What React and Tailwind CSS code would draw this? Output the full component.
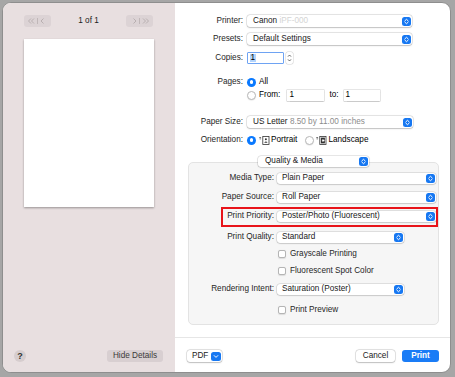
import React from "react";

const FONT = { fontFamily: '"Liberation Sans", Arial, sans-serif' };

function BlueStepper() {
  return (
    <span className="flex items-center justify-center w-[9px] h-[9px] rounded-[2.5px] bg-[#1778f2] shrink-0">
      <svg width="9" height="9" viewBox="0 0 9 9">
        <path d="M2.9 3.8 L4.5 2.3 L6.1 3.8" stroke="white" strokeWidth="1" fill="none" strokeLinecap="round" strokeLinejoin="round" />
        <path d="M2.9 5.2 L4.5 6.7 L6.1 5.2" stroke="white" strokeWidth="1" fill="none" strokeLinecap="round" strokeLinejoin="round" />
      </svg>
    </span>
  );
}

function Popup({ w, h = "h-[12px]", children, pl = "pl-[6px]" }) {
  return (
    <div
      className={`${w} ${h} ${pl} pr-[1.5px] flex items-center justify-between bg-white rounded-[3px] shadow-[0_0_0_0.5px_rgba(0,0,0,0.16),0_0.5px_1.5px_rgba(0,0,0,0.18)]`}
    >
      <span className="whitespace-nowrap text-[#202020] leading-none">{children}</span>
      <BlueStepper />
    </div>
  );
}

function Radio({ on }) {
  if (on)
    return (
      <span className="w-[9px] h-[9px] rounded-full bg-[#0a79ff] flex items-center justify-center shrink-0">
        <span className="w-[3.5px] h-[3.5px] rounded-full bg-white" />
      </span>
    );
  return (
    <span className="block w-[9px] h-[9px] rounded-full bg-white border-[0.5px] border-[#b8b8b8] shadow-[0_0.5px_1px_rgba(0,0,0,0.12)] shrink-0" />
  );
}

function Checkbox() {
  return (
    <span className="block w-[8px] h-[8px] rounded-[2px] bg-white border-[0.5px] border-[#b5b5b5] shadow-[0_0.5px_1px_rgba(0,0,0,0.1)] shrink-0" />
  );
}

function Field({ w, children }) {
  return (
    <div className={`${w} h-[11px] bg-white flex items-center pl-[2px] shadow-[0_0_0_0.5px_rgba(0,0,0,0.2),0_0.5px_1px_rgba(0,0,0,0.12)]`}>
      <span className="leading-none">{children}</span>
    </div>
  );
}

function PortraitIcon() {
  return (
    <svg width="11" height="9" viewBox="0 0 11 9">
      <path d="M1.2 1.2 L1.2 3.6 M0.3 2.1 L1.2 1 L2.1 2.1" stroke="#555" strokeWidth="0.7" fill="none" />
      <rect x="3.8" y="0.5" width="6.2" height="8" fill="white" stroke="#333" strokeWidth="0.8" />
      <circle cx="6.9" cy="3.3" r="1" fill="#333" />
      <path d="M5.2 6.8 Q6.9 4.4 8.6 6.8 Z" fill="#333" />
    </svg>
  );
}

function LandscapeIcon() {
  return (
    <svg width="11" height="9" viewBox="0 0 11 9">
      <path d="M1.2 1.2 L1.2 3.6 M0.3 2.1 L1.2 1 L2.1 2.1" stroke="#555" strokeWidth="0.7" fill="none" />
      <rect x="3.8" y="0.5" width="6.2" height="8" fill="white" stroke="#333" strokeWidth="0.8" />
      <rect x="4.9" y="1.6" width="4" height="5.8" fill="#333" />
      <circle cx="7.6" cy="4.5" r="0.9" fill="white" />
      <path d="M6.8 3 Q4.9 4.5 6.8 6 Z" fill="white" />
    </svg>
  );
}

function TopRow({ label, mt, children, h = "h-[12px]" }) {
  return (
    <div className={`flex items-center ${h} ${mt}`}>
      <span className="w-[68px] text-right text-[#262626] leading-none whitespace-nowrap">{label}</span>
      <div className="ml-[4px] flex items-center">{children}</div>
    </div>
  );
}

function BoxRow({ label, mt, children, h = "h-[11px]" }) {
  return (
    <div className={`flex items-center ${h} ${mt}`}>
      <span className="w-[85px] text-right text-[#262626] leading-none whitespace-nowrap">{label}</span>
      <div className="ml-[3px] flex items-center">{children}</div>
    </div>
  );
}

function CheckRow({ label, mt }) {
  return (
    <div className={`flex items-center h-[10px] ${mt} pl-[89px]`}>
      <Checkbox />
      <span className="ml-[4px] leading-none text-[#262626] whitespace-nowrap">{label}</span>
    </div>
  );
}

function NavGroup({ left }) {
  const c = "#b3aaac";
  return (
    <div className="w-[27px] h-[12px] rounded-[3px] bg-[#dcd3d5] flex items-center justify-center">
      <svg width="27" height="12" viewBox="0 0 27 12">
        {left ? (
          <>
            <path d="M7 3.5 L4.5 6 L7 8.5 M10 3.5 L7.5 6 L10 8.5" stroke={c} strokeWidth="0.9" fill="none" />
            <path d="M13.5 3 L13.5 9" stroke={c} strokeWidth="0.7" />
            <path d="M19.5 3.5 L17 6 L19.5 8.5" stroke={c} strokeWidth="0.9" fill="none" />
          </>
        ) : (
          <>
            <path d="M7.5 3.5 L10 6 L7.5 8.5" stroke={c} strokeWidth="0.9" fill="none" />
            <path d="M13.5 3 L13.5 9" stroke={c} strokeWidth="0.7" />
            <path d="M17 3.5 L19.5 6 L17 8.5 M20 3.5 L22.5 6 L20 8.5" stroke={c} strokeWidth="0.9" fill="none" />
          </>
        )}
      </svg>
    </div>
  );
}

export default function App() {
  return (
    <div className="w-[455px] h-[377px] bg-[#a6a6a6] pt-[2px] pl-[2px] pr-[4px] pb-[4px] text-[8.2px]" style={FONT}>
      <div className="w-full h-full rounded-[9px] border border-[#8e8e8e] overflow-hidden flex bg-white">
        {/* Sidebar */}
        <div className="w-[172px] h-full bg-[#e8dfe0] flex flex-col pt-[12px] pb-[10px]">
          <div className="flex items-center justify-between h-[12px] pl-[21px] pr-[22px]">
            <NavGroup left />
            <span className="text-[#222] leading-none">1 of 1</span>
            <NavGroup />
          </div>
          <div className="mt-[12px] mx-auto w-[130px] h-[168px] bg-white shadow-[0_1px_2px_rgba(0,0,0,0.35)]" />
          <div className="mt-auto flex items-center justify-between h-[12px] pl-[11px] pr-[12px]">
            <span className="w-[12px] h-[12px] rounded-full bg-[#d6cdce] flex items-center justify-center font-bold text-[9px] text-[#333] leading-none">?</span>
            <span className="w-[56px] h-[12px] rounded-[3px] bg-[#d8cfd1] flex items-center justify-center text-[#3a3a3a] leading-none">Hide Details</span>
          </div>
        </div>

        {/* Main */}
        <div className="flex-1 h-full flex flex-col pt-[12px]">
          <TopRow label="Printer:">
            <Popup w="w-[165px]">Canon <span className="text-[#d4d4d4]">iPF-000</span></Popup>
          </TopRow>
          <TopRow label="Presets:" mt="mt-[6px]">
            <Popup w="w-[165px]">Default Settings</Popup>
          </TopRow>
          <TopRow label="Copies:" mt="mt-[7px]">
            <div className="w-[37px] h-[12px] bg-white border-[1.5px] border-[#6ea3f3] rounded-[1px] flex items-center pl-[2px]">
              <span className="bg-[#b3d4fc] leading-none px-[0.5px]">1</span>
            </div>
            <div className="ml-[2px] w-[7px] h-[12px] rounded-[2px] bg-white shadow-[0_0_0_0.5px_rgba(0,0,0,0.18)] flex items-center justify-center">
              <svg width="7" height="12" viewBox="0 0 7 12">
                <path d="M2 4.6 L3.5 3 L5 4.6" stroke="#444" strokeWidth="0.8" fill="none" />
                <path d="M2 7.4 L3.5 9 L5 7.4" stroke="#444" strokeWidth="0.8" fill="none" />
              </svg>
            </div>
          </TopRow>
          <TopRow label="Pages:" mt="mt-[12px]">
            <Radio on />
            <span className="ml-[3px] leading-none">All</span>
          </TopRow>
          <TopRow label="" mt="mt-[1px]">
            <Radio />
            <span className="ml-[3px] leading-none">From:</span>
            <div className="ml-[7px]"><Field w="w-[37px]">1</Field></div>
            <span className="ml-[5px] leading-none">to:</span>
            <div className="ml-[5px]"><Field w="w-[36px]">1</Field></div>
          </TopRow>
          <TopRow label="Paper Size:" mt="mt-[15px]">
            <Popup w="w-[166px]">
              US Letter <span className="text-[#8c8c8c]">8.50 by 11.00 inches</span>
            </Popup>
          </TopRow>
          <TopRow label="Orientation:" mt="mt-[6px]">
            <Radio on />
            <span className="ml-[3px] flex"><PortraitIcon /></span>
            <span className="ml-[1px] leading-none">Portrait</span>
            <span className="ml-[8px] flex"><Radio /></span>
            <span className="ml-[2px] flex"><LandscapeIcon /></span>
            <span className="ml-[1px] leading-none">Landscape</span>
          </TopRow>

          {/* Group */}
          <div className="ml-[13px] mr-[11px] mt-[10px] flex flex-col">
            <div className="relative z-10 flex justify-center">
              <Popup w="w-[111px]" h="h-[11px]" pl="pl-[7px]">Quality &amp; Media</Popup>
            </div>
            <div className="-mt-[5px] rounded-[5px] border border-[#e3e3e3] bg-[#f6f6f6] pt-[10px] pb-[9px]">
              <BoxRow label="Media Type:">
                <Popup w="w-[159px]" h="h-[11px]" pl="pl-[5px]">Plain Paper</Popup>
              </BoxRow>
              <BoxRow label="Paper Source:" mt="mt-[8px]">
                <Popup w="w-[159px]" h="h-[11px]" pl="pl-[5px]">Roll Paper</Popup>
              </BoxRow>
              <div className="relative mt-[8px]">
                <BoxRow label="Print Priority:">
                  <Popup w="w-[159px]" h="h-[11px]" pl="pl-[5px]">Poster/Photo (Fluorescent)</Popup>
                </BoxRow>
                <div className="absolute left-[32px] right-0 top-[-4px] h-[20px] border-2 border-[#e8141a]" />
              </div>
              <BoxRow label="Print Quality:" mt="mt-[10px]">
                <Popup w="w-[127px]" h="h-[11px]" pl="pl-[5px]">Standard</Popup>
              </BoxRow>
              <CheckRow label="Grayscale Printing" mt="mt-[6px]" />
              <CheckRow label="Fluorescent Spot Color" mt="mt-[7px]" />
              <BoxRow label="Rendering Intent:" mt="mt-[8px]">
                <Popup w="w-[127px]" h="h-[11px]" pl="pl-[5px]">Saturation (Poster)</Popup>
              </BoxRow>
              <CheckRow label="Print Preview" mt="mt-[10px]" />
            </div>
          </div>

          <div className="mt-[12px] h-px bg-[#e6e6e6]" />

          <div className="pt-[12px] pl-[12px] pr-[11px] flex items-center h-[24px]">
            <div className="w-[35px] h-[12px] bg-white rounded-[3px] shadow-[0_0_0_0.5px_rgba(0,0,0,0.18),0_0.5px_1.5px_rgba(0,0,0,0.18)] flex items-center justify-between pl-[5px] pr-[1px]">
              <span className="leading-none text-[#222]">PDF</span>
              <span className="w-[10px] h-[9px] rounded-[2.5px] bg-[#1778f2] flex items-center justify-center">
                <svg width="10" height="9" viewBox="0 0 10 9">
                  <path d="M3.2 3.6 L5 5.4 L6.8 3.6" stroke="white" strokeWidth="1" fill="none" strokeLinecap="round" strokeLinejoin="round" />
                </svg>
              </span>
            </div>
            <div className="ml-auto w-[39px] h-[12px] bg-white rounded-[3px] shadow-[0_0_0_0.5px_rgba(0,0,0,0.18),0_0.5px_1.5px_rgba(0,0,0,0.18)] flex items-center justify-center">
              <span className="leading-none text-[#222]">Cancel</span>
            </div>
            <div className="ml-[7px] w-[37px] h-[12px] bg-[#1a7cf6] rounded-[3px] flex items-center justify-center">
              <span className="leading-none text-white font-bold">Print</span>
            </div>
          </div>
        </div>
      </div>
    </div>
  );
}
